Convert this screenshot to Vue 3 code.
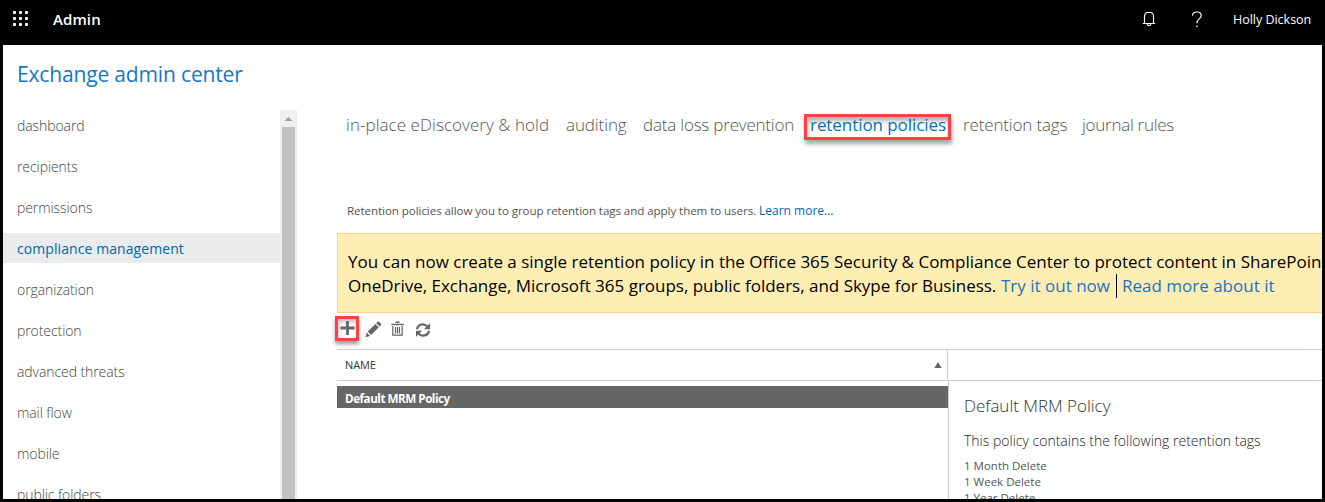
<script setup>
const navItems = [
  { label: 'dashboard', id: 'dashboard' },
  { label: 'recipients', id: 'recipients' },
  { label: 'permissions', id: 'permissions' },
  { label: 'compliance management', id: 'compliance', active: true },
  { label: 'organization', id: 'organization' },
  { label: 'protection', id: 'protection' },
  { label: 'advanced threats', id: 'threats' },
  { label: 'mail flow', id: 'mailflow' },
  { label: 'mobile', id: 'mobile' },
  { label: 'public folders', id: 'folders' },
]
const tabs = [
  { label: 'in-place eDiscovery & hold', id: 'ediscovery' },
  { label: 'auditing', id: 'auditing' },
  { label: 'data loss prevention', id: 'dlp' },
  { label: 'retention policies', id: 'policies', active: true },
  { label: 'retention tags', id: 'tags' },
  { label: 'journal rules', id: 'journal' },
]
const tags = ['1 Month Delete', '1 Week Delete', '1 Year Delete']
</script>

<template>
  <div class="window">
    <header class="topbar">
      <svg class="waffle" width="16" height="16" viewBox="0 0 16 16" fill="#fff">
        <template v-for="r in 3" :key="r">
          <rect v-for="c in 3" :key="c" :x="(c - 1) * 6" :y="(r - 1) * 6" width="3" height="3" rx="0.8" />
        </template>
      </svg>
      <span class="product">Admin</span>
      <svg class="bell" width="14" height="16" viewBox="0 0 14 16" fill="none" stroke="#fff" stroke-width="1.1">
        <path d="M2.5 12.5V5.8Q2.5 1.5 5.8 1.5H8.2Q11.5 1.5 11.5 5.8V12.5M0.8 12.5H13.2M5 12.8Q5.2 14.6 7 14.6Q8.8 14.6 9 12.8" />
      </svg>
      <svg class="help" width="12" height="17" viewBox="0 0 12 17" fill="none" stroke="#fff" stroke-width="1.15">
        <path d="M1.5 4.6Q1.7 1 5.8 1Q10.2 1 10.2 4.6Q10.2 6.3 8.2 7.9Q6 9.6 6 12.3" />
        <path d="M6 14.6V16" stroke-width="1.4" />
      </svg>
      <span class="user">Holly Dickson</span>
    </header>

    <div class="body">
      <aside class="sidebar">
        <h1 class="title">Exchange admin center</h1>
        <div class="nav-row">
          <nav class="nav">
            <div v-for="n in navItems" :key="n.id" class="nav-item" :class="[n.id, { active: n.active }]">
              <span>{{ n.label }}</span>
            </div>
          </nav>
          <div class="scrollbar">
            <svg width="17" height="17" viewBox="0 0 17 17"><path d="M4.5 11L8.5 7L12.5 11Z" fill="#a0a0a0" /></svg>
            <div class="thumb"></div>
          </div>
        </div>
      </aside>

      <main class="content">
        <div class="tabs">
          <span v-for="t in tabs" :key="t.id" class="tab" :class="[t.id, { active: t.active }]">{{ t.label }}</span>
        </div>
        <p class="intro">
          <span class="intro-text">Retention policies allow you to group retention tags and apply them to users.</span>
          <a class="learn">Learn more...</a>
        </p>
        <div class="banner">
          <div class="line first">You can now create a single retention policy in the Office 365 Security &amp; Compliance Center to protect content in SharePoint,</div>
          <div class="line">
            <span class="second">OneDrive, Exchange, Microsoft 365 groups, public folders, and Skype for Business.</span>
            <a class="try">Try it out now</a>
            <i class="divider"></i>
            <a class="read">Read more about it</a>
          </div>
        </div>
        <div class="toolbar">
          <span class="add">
            <svg width="18" height="18" viewBox="0 0 18 18"><path d="M9.5 2V16M2.5 9H16.5" stroke="#666" stroke-width="2.8" /></svg>
          </span>
          <svg class="edit" width="17" height="17" viewBox="0 0 17 17" fill="#666">
            <path d="M0.5 16.2L1.8 11.5L5.1 14.9ZM2.7 10.6L10.4 3L13.8 6.3L6.1 14ZM11.2 2.2L12.6 0.8Q13.4 0.1 14.3 0.9L15.8 2.4Q16.6 3.3 15.9 4.1L14.6 5.5Z" />
          </svg>
          <svg class="trash" width="13" height="16" viewBox="0 0 13 16" fill="none" stroke="#666">
            <path d="M4.5 1.3H8.5M0.3 3.5H12.7" stroke-width="1.5" />
            <path d="M1.8 5V14.2H11.2V5M4.5 6V12.5M6.5 6V12.5M8.5 6V12.5" stroke-width="1.2" />
          </svg>
          <svg class="refresh" width="16" height="16" viewBox="0 0 16 16">
            <path d="M2 7.2Q2.8 2.6 7.5 2.3Q10.5 2.2 12.2 4.4M14 8.8Q13.2 13.4 8.5 13.7Q5.5 13.8 3.8 11.6" fill="none" stroke="#666" stroke-width="2.3" />
            <path d="M15 1.2V7.2H8.8ZM1 14.8V8.8H7.2Z" fill="#666" />
          </svg>
        </div>
        <div class="grid-head">
          <div class="col-name">
            <span>NAME</span>
            <svg width="8" height="6" viewBox="0 0 8 6"><path d="M0.3 6L4 0L7.7 6Z" fill="#666" /></svg>
          </div>
        </div>
        <div class="grid-body">
          <div class="list"><div class="row"><span>Default MRM Policy</span></div></div>
          <section class="details">
            <h2>Default MRM Policy</h2>
            <p>This policy contains the following retention tags</p>
            <ul><li v-for="t in tags" :key="t">{{ t }}</li></ul>
          </section>
        </div>
      </main>
    </div>
  </div>
</template>

<style>
body { margin: 0; overflow: hidden; background: #000; }
</style>

<style scoped>
* { box-sizing: border-box; }
.window { width: 1325px; height: 502px; background: #000; padding: 0 3px 3px; display: flex; flex-direction: column; overflow: hidden; font-family: "Open Sans", "Noto Sans", sans-serif; color: #666; white-space: nowrap; }
.topbar { height: 45px; flex: none; display: flex; align-items: flex-start; color: #fff; padding-left: 10px; }
.waffle { margin-top: 11px; }
.product { margin: 9px 0 0 24px; width: 1089px; font-size: 15px; line-height: 20px; font-weight: 600; letter-spacing: 0.1px; }
.bell { margin-top: 11px; }
.help { margin: 11px 0 0 35px; }
.user { margin: 10px 0 0 30px; font-size: 12.5px; line-height: 20px; letter-spacing: -0.02px; }
.body { flex: 1; min-height: 0; display: flex; background: #fff; overflow: hidden; }
.sidebar { width: 326px; flex: none; }
.title { margin: 14px 0 0 14px; height: 30px; line-height: 30px; font-size: 21px; font-weight: 400; letter-spacing: -0.16px; color: #1478c8; }
.nav-row { margin-top: 21px; height: 400px; display: flex; }
.nav { width: 277px; }
.nav-item { height: 30px; margin-bottom: 11px; padding-left: 14px; line-height: 32px; font-size: 14px; font-weight: 300; letter-spacing: -0.08px; color: #444; }
.nav-item.active { background: #eaebec; color: #0067b0; font-weight: 400; letter-spacing: 0.08px; }
.scrollbar { width: 17px; background: #f0f0f0; display: flex; flex-direction: column; }
.thumb { flex: 1; margin: 0 2px; background: #c1c1c1; }
.content { flex: 1; min-width: 0; overflow: hidden; padding-left: 8px; }
.tabs { display: flex; margin: 65px 0 0 9px; height: 30px; line-height: 30px; font-size: 17px; font-weight: 300; color: #555; }
.tab { flex: none; }
.ediscovery { width: 220px; letter-spacing: 0.05px; }
.auditing { width: 77px; letter-spacing: -0.1px; }
.dlp { width: 167px; letter-spacing: -0.2px; }
.policies { width: 153px; letter-spacing: -0.07px; }
.tags { width: 119px; letter-spacing: -0.15px; }
.journal { letter-spacing: -0.27px; }
.tab.active { position: relative; color: #0072c6; font-weight: 400; }
.tab.active::after { content: ""; box-sizing: border-box; position: absolute; left: -6px; top: 4px; width: 147px; height: 26px; border: 3px solid #fb4141; box-shadow: 1px 4px 4px rgba(0,0,0,.35), inset 1px 4px 4px rgba(0,0,0,.3); }
.intro { display: flex; gap: 4px; margin: 61px 0 0 10px; height: 20px; line-height: 20px; font-size: 11.6px; color: #555; }
.intro-text { width: 408px; letter-spacing: -0.08px; }
.learn { color: #0067b0; font-size: 12px; }
.banner { height: 80px; margin-top: 12px; border: 1px solid #ffd480; border-right: 0; background: #ffeeb3; padding: 16px 0 0 10px; color: #000; font-size: 17px; line-height: 24px; overflow: hidden; }
.line { display: flex; height: 24px; }
.second { width: 649px; flex: none; letter-spacing: -0.01px; }
.line a { color: #1a73c8; }
.try { width: 110px; margin-left: 4px; }
.divider { width: 1px; height: 24px; margin: 0 5px 0 5px; background: #000; }
.toolbar { display: flex; height: 36px; }
.add { margin: 3px 0 0 -2px; width: 24px; height: 25px; flex: none; border: 3px solid #fb4141; box-shadow: 0 3px 4px rgba(0,0,0,.4), inset 1px 3px 4px rgba(0,0,0,.25); }
.add svg { display: block; }
.edit { margin: 8px 0 0 5.5px; }
.trash { margin: 8px 0 0 9px; }
.refresh { margin: 8.5px 0 0 11px; }
.grid-head { height: 32px; border-top: 1px solid #c8cfd2; border-bottom: 1px solid #c8cfd2; }
.col-name { width: 611px; height: 30px; border-right: 1px solid #c8cfd2; display: flex; align-items: center; justify-content: space-between; padding: 0 5px 1px 8px; font-size: 11px; letter-spacing: -0.1px; color: #333; }
.grid-body { display: flex; height: 130px; }
.list { width: 611px; padding-top: 5px; }
.row { height: 22px; line-height: 24px; background: #666; color: #fff; padding-left: 8px; font-size: 11.7px; font-weight: 700; letter-spacing: -0.5px; }
.details { flex: 1; border-left: 1px solid #c8cfd2; padding: 13px 0 0 15px; }
.details h2 { margin: 0; height: 24px; line-height: 24px; font-size: 17px; font-weight: 300; letter-spacing: -0.02px; color: #333; }
.details p { margin: 12px 0 0; height: 22px; line-height: 22px; font-size: 14px; font-weight: 300; color: #222; }
.details ul { list-style: none; margin: 6px 0 0; padding: 0; font-size: 11.5px; line-height: 16px; color: #555; }
</style>
